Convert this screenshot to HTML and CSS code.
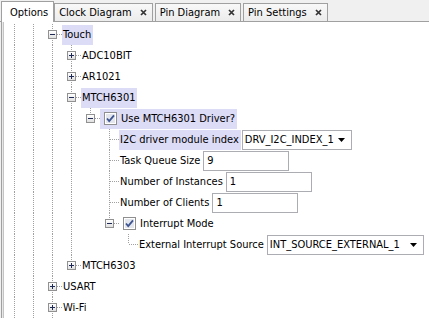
FILE: index.html
```html
<!DOCTYPE html>
<html lang="en">

<head>
    <meta charset="UTF-8">
    <title>Options</title>
    <link rel="stylesheet" href="styles.css">
</head>

<body>
    <!-- tab strip -->
    <div class="tabs">
        <div class="tab active">Options</div>
        <div class="tab">Clock Diagram
            <svg class="close" width="7" height="7" viewBox="0 0 7 7"><path d="M1 1L6 6M6 1L1 6"/></svg>
        </div>
        <div class="tab">Pin Diagram
            <svg class="close" width="7" height="7" viewBox="0 0 7 7"><path d="M1 1L6 6M6 1L1 6"/></svg>
        </div>
        <div class="tab">Pin Settings
            <svg class="close" width="7" height="7" viewBox="0 0 7 7"><path d="M1 1L6 6M6 1L1 6"/></svg>
        </div>
    </div>

    <!-- options tree -->
    <div class="panel">
        <div class="tree">
            <div class="row">
                <span class="g pipe"></span><span class="g pipe"></span>
                <span class="g tee"><i class="exp"></i></span>
                <span class="label hl">Touch</span>
            </div>
            <div class="row">
                <span class="g pipe"></span><span class="g pipe"></span><span class="g pipe"></span>
                <span class="g tee"><i class="exp plus"></i></span>
                <span class="label">ADC10BIT</span>
            </div>
            <div class="row">
                <span class="g pipe"></span><span class="g pipe"></span><span class="g pipe"></span>
                <span class="g tee"><i class="exp plus"></i></span>
                <span class="label">AR1021</span>
            </div>
            <div class="row">
                <span class="g pipe"></span><span class="g pipe"></span><span class="g pipe"></span>
                <span class="g tee"><i class="exp"></i></span>
                <span class="label hl">MTCH6301</span>
            </div>
            <div class="row">
                <span class="g pipe"></span><span class="g pipe"></span><span class="g pipe"></span><span class="g pipe"></span>
                <span class="g elbow"><i class="exp"></i></span>
                <span class="label check hl">
                    <svg width="13" height="13" viewBox="0 0 13 13"><rect x="0.5" y="0.5" width="12" height="12" fill="#fff" stroke="#8f8f8f"/><rect x="2" y="2" width="9" height="9" fill="#e3e6ed"/><path d="M3 6.5L5.2 9L10 3.3" fill="none" stroke="#3d5491" stroke-width="1.8"/></svg>
                    Use MTCH6301 Driver?
                </span>
            </div>
            <div class="row">
                <span class="g pipe"></span><span class="g pipe"></span><span class="g pipe"></span><span class="g pipe"></span>
                <span class="g"></span><span class="g tee"></span>
                <span class="label hl">I2C driver module index</span>
                <div class="field select i2c">DRV_I2C_INDEX_1
                    <svg width="7" height="4" viewBox="0 0 7 4"><path d="M0 0H7L3.5 4Z"/></svg>
                </div>
            </div>
            <div class="row">
                <span class="g pipe"></span><span class="g pipe"></span><span class="g pipe"></span><span class="g pipe"></span>
                <span class="g"></span><span class="g tee"></span>
                <span class="label">Task Queue Size</span>
                <input class="field" type="text" value="9">
            </div>
            <div class="row">
                <span class="g pipe"></span><span class="g pipe"></span><span class="g pipe"></span><span class="g pipe"></span>
                <span class="g"></span><span class="g tee"></span>
                <span class="label">Number of Instances</span>
                <input class="field" type="text" value="1">
            </div>
            <div class="row">
                <span class="g pipe"></span><span class="g pipe"></span><span class="g pipe"></span><span class="g pipe"></span>
                <span class="g"></span><span class="g tee"></span>
                <span class="label">Number of Clients</span>
                <input class="field" type="text" value="1">
            </div>
            <div class="row">
                <span class="g pipe"></span><span class="g pipe"></span><span class="g pipe"></span><span class="g pipe"></span>
                <span class="g"></span>
                <span class="g elbow"><i class="exp"></i></span>
                <span class="label check">
                    <svg width="13" height="13" viewBox="0 0 13 13"><rect x="0.5" y="0.5" width="12" height="12" fill="#fff" stroke="#8f8f8f"/><rect x="2" y="2" width="9" height="9" fill="#e3e6ed"/><path d="M3 6.5L5.2 9L10 3.3" fill="none" stroke="#3d5491" stroke-width="1.8"/></svg>
                    Interrupt Mode
                </span>
            </div>
            <div class="row">
                <span class="g pipe"></span><span class="g pipe"></span><span class="g pipe"></span><span class="g pipe"></span>
                <span class="g"></span><span class="g"></span><span class="g elbow"></span>
                <span class="label">External Interrupt Source</span>
                <div class="field select ext">INT_SOURCE_EXTERNAL_1
                    <svg width="7" height="4" viewBox="0 0 7 4"><path d="M0 0H7L3.5 4Z"/></svg>
                </div>
            </div>
            <div class="row">
                <span class="g pipe"></span><span class="g pipe"></span><span class="g pipe"></span>
                <span class="g elbow"><i class="exp plus"></i></span>
                <span class="label">MTCH6303</span>
            </div>
            <div class="row">
                <span class="g pipe"></span><span class="g pipe"></span>
                <span class="g tee"><i class="exp plus"></i></span>
                <span class="label">USART</span>
            </div>
            <div class="row">
                <span class="g pipe"></span><span class="g pipe"></span>
                <span class="g tee"><i class="exp plus"></i></span>
                <span class="label">Wi-Fi</span>
            </div>
        </div>
    </div>
</body>

</html>
```

FILE: styles.css
```css
* {
    margin: 0;
    padding: 0;
    box-sizing: border-box;
}

body {
    width: 429px;
    height: 318px;
    overflow: hidden;
    background: #f0f0f0;
    color: #000;
    font: 11px "DejaVu Sans Condensed", "Liberation Sans", sans-serif;
}

/* 标签栏 */
.tabs {
    display: flex;
    align-items: flex-end;
    height: 22px;
    padding-left: 1px;
    background: #f0f0f0;
    border-bottom: 1px solid #a0a0a0;
}

.tab {
    display: flex;
    align-items: center;
    height: 18px;
    padding: 0 5px 0 4px;
    margin-right: 2px;
    border: 1px solid #a0a0a0;
    border-bottom: 0;
    background: linear-gradient(#f8f8f8, #ececec);
    white-space: nowrap;
}

.tab.active {
    height: 21px;
    margin-bottom: -1px;
    margin-right: 0;
    padding: 0 5px 0 8px;
    background: #fff;
}

.close {
    margin-left: 8px;
    stroke: #333;
    stroke-width: 1.7;
}

/* 树 */
.panel {
    height: 296px;
    margin-left: 1px;
    border-left: 1px solid #a0a0a0;
    background: #e8e8e8;
}

.tree {
    height: 100%;
    margin-left: 1px;
    padding: 2px 0 0 1px;
    border-left: 1px solid #c4c4c4;
    background: #fff;
}

.row {
    display: flex;
    align-items: center;
    height: 21px;
}

.g {
    flex: none;
    width: 19px;
    height: 21px;
}

.pipe {
    background: repeating-linear-gradient(#a0a0a0 0 1px, transparent 1px 2px) 9px 0 / 1px 21px no-repeat;
}

.tee {
    background:
        repeating-linear-gradient(to right, #a0a0a0 0 1px, transparent 1px 2px) 10px 10px / 9px 1px no-repeat,
        repeating-linear-gradient(#a0a0a0 0 1px, transparent 1px 2px) 9px 0 / 1px 21px no-repeat;
}

.elbow {
    background:
        repeating-linear-gradient(to right, #a0a0a0 0 1px, transparent 1px 2px) 10px 10px / 9px 1px no-repeat,
        repeating-linear-gradient(#a0a0a0 0 1px, transparent 1px 2px) 9px 0 / 1px 10px no-repeat;
}

/* 展开按钮 */
.exp {
    display: block;
    width: 9px;
    height: 9px;
    margin: 6px 0 0 5px;
    border: 1px solid #919191;
    background:
        linear-gradient(#1e2a55, #1e2a55) 1px 3px / 5px 1px no-repeat,
        linear-gradient(#fff, #e0e0e0);
}

.exp.plus {
    background:
        linear-gradient(#1e2a55, #1e2a55) 1px 3px / 5px 1px no-repeat,
        linear-gradient(#1e2a55, #1e2a55) 3px 1px / 1px 5px no-repeat,
        linear-gradient(#fff, #e0e0e0);
}

.label {
    display: flex;
    align-items: center;
    height: 20px;
    padding: 0 2px 0 1px;
    white-space: nowrap;
}

.label.check svg {
    margin: 0 4px 0 3px;
}

.hl {
    background: #dcdcf7;
}

/* 输入框 */
.field {
    flex: none;
    width: 86px;
    height: 20px;
    margin-left: 1px;
    padding: 0 3px;
    border: 1px solid #abadb3;
    background: #fff;
    color: #000;
    font: inherit;
    outline: none;
}

.select {
    display: flex;
    align-items: center;
    justify-content: space-between;
    padding: 0 6px 0 2px;
    white-space: nowrap;
}

.i2c {
    width: 110px;
}

.ext {
    width: 157px;
}
```
